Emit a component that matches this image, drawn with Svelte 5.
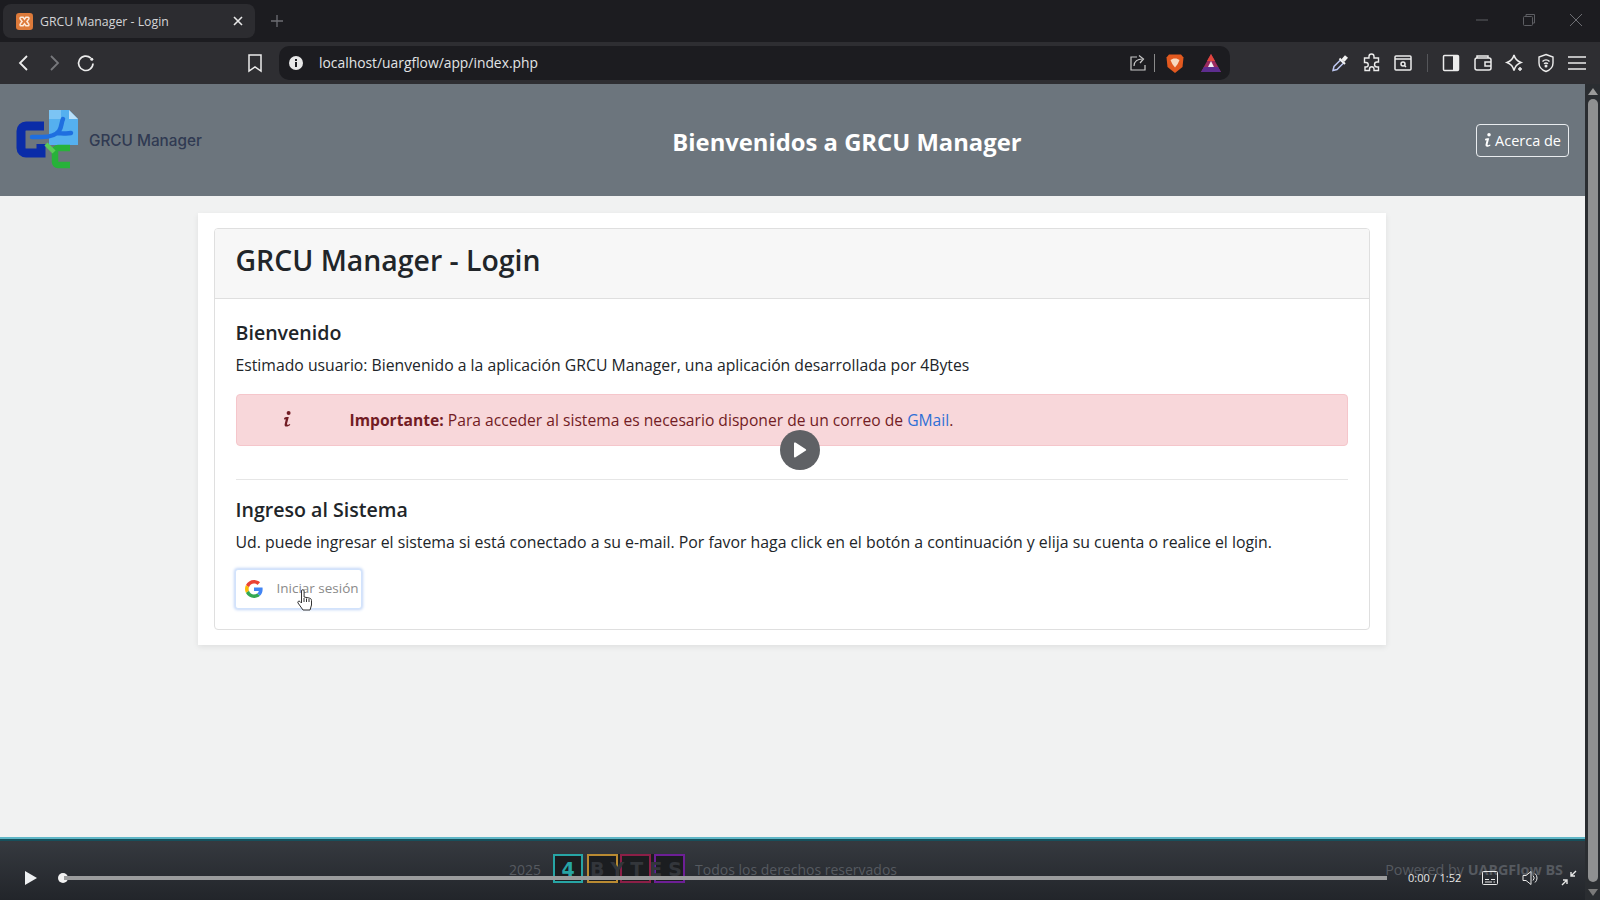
<script>
  const bytes = ['B', 'Y', 'T', 'E', 'S'];
  const frames = ['bo', 'br', 'bp'];
</script>

{#snippet infoIcon(color, w, h)}
  <svg width={w} height={h} viewBox="0 0 10 17" fill={color}>
    <circle cx="5.6" cy="2" r="2"/>
    <path d="M1 7.200c.5-.9 1.300-1.200 4.800-1.200L4 12.800c-.3 1.300.8 1.400 2.800.2l.5.8C5.500 15.800 1.300 16.600 1.600 13.400L2.800 8.300c-.5 0-1 .2-1.300.4z"/>
  </svg>
{/snippet}

<div class="screen">
  <div class="tabstrip">
    <div class="tab">
      <svg class="favicon" width="17" height="17" viewBox="0 0 16 16">
        <rect width="16" height="16" rx="3" fill="#dd7a3a"/>
        <path d="M4.500 4h2.200L8 5.800 9.300 4h2.200c.8 0 1 1.400.2 2.200L10.300 8l1.400 1.800c.8.800.6 2.200-.2 2.200H9.300L8 10.200 6.700 12H4.500c-.8 0-1-1.400-.2-2.200L5.700 8 4.300 6.200C3.500 5.400 3.700 4 4.500 4z" fill="none" stroke="#fde9da" stroke-width="1.400"/>
      </svg>
      <span class="tabtitle">GRCU Manager - Login</span>
      <svg class="tabclose" width="10" height="10" viewBox="0 0 10 10"><path d="M1 1l8 8M9 1l-8 8" stroke="#e8e8e8" stroke-width="1.600"/></svg>
    </div>
    <svg class="newtab" width="14" height="14" viewBox="0 0 14 14"><path d="M7 1v12M1 7h12" stroke="#6d6e73" stroke-width="1.300"/></svg>
    <div class="winctl">
      <svg width="14" height="14" viewBox="0 0 14 14"><path d="M1 7h12" stroke="#5d5e63"/></svg>
      <svg width="14" height="14" viewBox="0 0 14 14" fill="none" stroke="#5d5e63"><rect x="1.500" y="3.500" width="9" height="9" rx="1"/><path d="M4 3.500V1.500h8.500V10h-2"/></svg>
      <svg width="14" height="14" viewBox="0 0 14 14"><path d="M1 1l12 12M13 1L1 13" stroke="#6d6e73"/></svg>
    </div>
  </div>

  <div class="toolbar">
    <div class="nav">
      <svg width="18" height="20" viewBox="0 0 18 20" fill="none" stroke="#ececec" stroke-width="1.800"><path d="M13 3l-7 7 7 7"/></svg>
      <svg width="18" height="20" viewBox="0 0 18 20" fill="none" stroke="#77787c" stroke-width="1.800"><path d="M6 3l7 7-7 7"/></svg>
      <svg width="20" height="20" viewBox="0 0 20 20" fill="none" stroke="#ececec" stroke-width="1.700"><path d="M17 10.500a7.200 7.200 0 1 1-2.200-5.400"/><circle cx="15.800" cy="6.200" r="1.500" fill="#ececec" stroke="none"/></svg>
    </div>
    <svg class="bookmark" width="16" height="20" viewBox="0 0 16 20" fill="none" stroke="#ececec" stroke-width="1.500"><path d="M2 2h12v16l-6-4-6 4z"/></svg>
    <div class="urlbar">
      <svg class="info" width="14" height="14" viewBox="0 0 14 14"><circle cx="7" cy="7" r="7" fill="#e8e8e8"/><rect x="6" y="6" width="2" height="5" fill="#1d1d21"/><rect x="6" y="3" width="2" height="2" fill="#1d1d21"/></svg>
      <span class="url">localhost/uargflow/app/index.php</span>
      <svg class="share" width="18" height="18" viewBox="0 0 18 18" fill="none" stroke="#c9c9c9" stroke-width="1.200"><path d="M8 3H2v13h14v-5"/><path d="M5 12c0-5 4-7 8-7M10 1.500L14.500 5 11 9"/></svg>
      <span class="urlsep"></span>
      <svg class="brave" width="18" height="21" viewBox="0 0 18 21">
        <path d="M3 1.500h12l2.500 3-1 9.500L9 20 1.500 14l-1-9.500z" fill="#e2591f"/>
        <path d="M4.500 7l3-1.500h3l3 1.500-1.800 4L9 14.500 6.300 11z" fill="#f7d9bf"/>
      </svg>
      <svg class="bat" width="20" height="18" viewBox="0 0 20 18">
        <path d="M10 0L20 18H0z" fill="#9b2a5f"/>
        <path d="M10 0l4 7H6z" fill="#e0453c"/>
        <path d="M0 18l3-5h14l3 5z" fill="#5d2d8f"/>
        <path d="M10 7l3 6H7z" fill="#f2ecf2"/>
      </svg>
    </div>
    <div class="tools">
      <svg width="20" height="20" viewBox="0 0 20 20" fill="none" stroke-width="1.500"><path d="M3 17.500l1-4 6.500-6.500 3 3L7 16.500z" stroke="#bcc6f0"/><path d="M9.500 5.500l5.500 5.500" stroke="#f2f2f2" stroke-width="2"/><path d="M13 7.500l3.500-4" stroke="#f2f2f2" stroke-width="4"/></svg>
      <svg width="20" height="20" viewBox="0 0 20 20" fill="none" stroke="#ececec" stroke-width="1.400"><path d="M7 3.500a2.500 2.500 0 0 1 5 0V5h4.500v4h-1.500a2.500 2.500 0 0 0 0 5h1.500v3.500H12V16a2.200 2.200 0 0 0-4.500 0v1.500H3V14h1a2.200 2.200 0 0 0 0-4.500H2.500V5H7z"/></svg>
      <svg width="20" height="20" viewBox="0 0 20 20" fill="none" stroke="#ececec" stroke-width="1.500"><rect x="2" y="3" width="16" height="14" rx="1"/><path d="M2 6h16"/><circle cx="10" cy="11" r="2"/><path d="M11.500 12.500l1.500 1.500"/></svg>
      <span class="toolsep"></span>
      <svg width="20" height="20" viewBox="0 0 20 20"><rect x="2.500" y="2.500" width="15" height="15" rx="1" fill="none" stroke="#ececec" stroke-width="1.500"/><rect x="12" y="3" width="5" height="14" fill="#ececec"/></svg>
      <svg width="20" height="20" viewBox="0 0 20 20" fill="none" stroke="#ececec" stroke-width="1.500"><rect x="2" y="5" width="16" height="12" rx="2"/><path d="M18 9h-6v4h6M4 5V3h11v2"/></svg>
      <svg width="20" height="20" viewBox="0 0 20 20" fill="none" stroke="#ececec" stroke-width="1.500"><path d="M10 2c1 4 3 6 7 7.500-4 1.500-6 3.500-7 8-1-4.500-3-6.500-7-8 4-1.500 6-3.500 7-7.500z"/><path d="M16 14v4M14 16h4"/></svg>
      <svg width="20" height="20" viewBox="0 0 20 20" fill="none" stroke="#ececec" stroke-width="1.400"><path d="M10 1.500l7 2.500v6c0 4-3 7-7 8.500-4-1.500-7-4.500-7-8.500V4z"/><path d="M6.500 8.500a5 5 0 0 1 7 0M8 10.800a3 3 0 0 1 4 0"/><circle cx="10" cy="13" r=".8" fill="#ececec"/></svg>
      <svg width="20" height="20" viewBox="0 0 20 20" stroke="#ececec" stroke-width="1.500"><path d="M1 4h18M1 10h18M1 16h18"/></svg>
    </div>
  </div>

  <div class="viewport">
    <div class="page">
      <header class="hero">
        <div class="brand">
          <svg class="logo" width="64" height="62" viewBox="0 0 64 62">
            <path d="M33 2h20l9 9v26H33z" fill="#55b0ef"/>
            <path d="M33 2h12v9H33z" fill="#7cc4f4"/>
            <path d="M53 2l9 9h-9z" fill="#b8dff9"/>
            <path d="M28 18H10a5 5 0 0 0-5 5v17a5 5 0 0 0 5 5h15V36" fill="none" stroke="#0a2ca8" stroke-width="9"/>
            <path d="M16 29h10c8 0 14-2 17-6s2-8 4-12M41 25c4 0 9 1 14 0" fill="none" stroke="#1f6fe0" stroke-width="4.500" stroke-linecap="round"/>
            <path d="M54 40H42a3 3 0 0 0-3 3v11a3 3 0 0 0 3 3h12" fill="none" stroke="#28b23a" stroke-width="6.500"/>
            <path d="M30 36l8 8" stroke="#5ccb58" stroke-width="4.500"/>
          </svg>
          <span class="brandname">GRCU Manager</span>
        </div>
        <h1 class="hero-title">Bienvenidos a GRCU Manager</h1>
        <button class="about">{@render infoIcon('#fff', 9, 15)}<span>Acerca de</span></button>
      </header>

      <main class="content">
        <div class="outer">
          <section class="card">
            <div class="card-head"><h2>GRCU Manager - Login</h2></div>
            <div class="card-body">
              <h3>Bienvenido</h3>
              <p class="p1">Estimado usuario: Bienvenido a la aplicación GRCU Manager, una aplicación desarrollada por 4Bytes</p>
              <div class="alert">
                <span class="alert-icon">{@render infoIcon('#721c24', 10, 17)}</span>
                <span><strong>Importante:</strong> Para acceder al sistema es necesario disponer de un correo de <a href="#top">GMail</a>.</span>
              </div>
              <hr />
              <h3>Ingreso al Sistema</h3>
              <p class="p2">Ud. puede ingresar el sistema si está conectado a su e-mail. Por favor haga click en el botón a continuación y elija su cuenta o realice el login.</p>
              <button class="google">
                <svg width="18" height="18" viewBox="0 0 48 48">
                  <path fill="#EA4335" d="M24 9.500c3.500 0 6.700 1.200 9.200 3.600l6.900-6.900C35.900 2.400 30.400 0 24 0 14.600 0 6.500 5.400 2.600 13.200l8 6.200C12.500 13.700 17.800 9.500 24 9.500z"/>
                  <path fill="#4285F4" d="M47 24.500c0-1.600-.1-3.100-.4-4.500H24v9h12.900c-.6 3-2.200 5.500-4.700 7.200l7.700 6c4.500-4.200 7.100-10.300 7.100-17.700z"/>
                  <path fill="#FBBC05" d="M10.500 28.600c-.5-1.500-.8-3-.8-4.600s.3-3.100.8-4.600l-8-6.200C.9 16.500 0 20.100 0 24s.9 7.500 2.600 10.800z"/>
                  <path fill="#34A853" d="M24 48c6.500 0 11.900-2.100 15.900-5.800l-7.700-6c-2.200 1.400-4.900 2.300-8.200 2.300-6.200 0-11.500-4.200-13.400-9.900l-8 6.200C6.500 42.600 14.600 48 24 48z"/>
                </svg>
                <span>Iniciar sesión</span>
              </button>
            </div>
          </section>
        </div>
      </main>

      <footer class="foot">
        <span class="year">2025</span>
        <span class="boxes">
          <span class="box b4">4</span>
          <span class="word">
            {#each frames as f}<span class="box {f}"></span>{/each}
            <span class="letters">
              {#each bytes as l}<span>{l}</span>{/each}
            </span>
          </span>
        </span>
        <span>Todos los derechos reservados</span>
        <span class="powered">Powered by <b>UARGFlow BS</b></span>
      </footer>
    </div>
    <div class="scrollbar">
      <span class="arrow up"></span>
      <span class="thumb"></span>
      <span class="arrow down"></span>
    </div>

    <div class="bigplay">
      <svg width="14" height="16" viewBox="0 0 14 16"><path d="M1 1.500a1 1 0 0 1 1.500-.9l10 6.500a1 1 0 0 1 0 1.700l-10 6.500A1 1 0 0 1 1 14.500z" fill="#fff"/></svg>
    </div>

    <div class="cursor">
      <svg width="16" height="22" viewBox="0 0 16 22" fill="#fff" stroke="#333" stroke-width="1"><path d="M4.500 2a1.300 1.300 0 0 1 2.600 0v6l5 1c1.500.4 2.400 1 2.400 2.500V16l-1.500 5H6L1 14c-.8-1.200.8-2.700 2-1.500l1.500 1.500z"/><path d="M7 9v4M9.500 9.500V13M12 10v3" fill="none"/></svg>
    </div>

    <div class="player">
      <svg class="pl-play" width="14" height="16" viewBox="0 0 14 16"><path d="M1 1l12 7-12 7z" fill="#eef0f2"/></svg>
      <span class="knob"></span>
      <span class="track"></span>
      <span class="time">0:00 / 1:52</span>
      <svg class="pl-cc" width="16" height="14" viewBox="0 0 16 14" fill="none" stroke="#e8e8e8"><rect x=".5" y=".5" width="15" height="13" rx="1"/><path d="M3 8.500h4M9 8.500h4M3 11h7M11.500 11H13"/></svg>
      <svg class="pl-vol" width="16" height="16" viewBox="0 0 16 16" fill="none" stroke="#e8e8e8"><path d="M1 5.500h3L9 1.500v13L4 10.500H1z"/><path d="M11 5.500a3.500 3.500 0 0 1 0 5M13 3.500a6 6 0 0 1 0 9"/></svg>
      <svg class="pl-exit" width="16" height="16" viewBox="0 0 16 16" fill="none" stroke="#e8e8e8" stroke-width="1.400"><path d="M15 1l-5 5M10 2v4h4M1 15l5-5M6 14v-4H2"/></svg>
    </div>
  </div>
</div>

<style>
  :global(body) {
    margin: 0;
    overflow: hidden;
    background: #1d1d21;
  }
  .screen {
    width: 1600px;
    height: 900px;
    display: flex;
    flex-direction: column;
    overflow: hidden;
    font-family: "Open Sans", "Noto Sans", sans-serif;
    color: #212529;
  }
  svg { display: block; flex: none; }

  /* Browser chrome */
  .tabstrip {
    height: 42px;
    flex: none;
    background: #1c1c20;
    display: flex;
    align-items: flex-start;
    padding: 4px 0 0 3px;
    box-sizing: border-box;
  }
  .tab {
    width: 252px;
    height: 34px;
    background: #2c2c30;
    border-radius: 8px;
    display: flex;
    align-items: center;
    padding: 0 12px 0 13px;
    box-sizing: border-box;
    color: #d5d5d7;
    font-size: 12.300px;
  }
  .tabtitle { margin-left: 7px; flex: 1; }
  .newtab { margin: 10px 0 0 15px; }
  .winctl {
    margin-left: auto;
    display: flex;
    gap: 33px;
    padding: 9px 17px 0 0;
  }
  .toolbar {
    height: 42px;
    flex: none;
    background: #2e2e32;
    display: flex;
    align-items: center;
    padding-left: 14px;
    box-sizing: border-box;
  }
  .nav { display: flex; align-items: center; gap: 13px; }
  .bookmark { margin-left: 151px; }
  .urlbar {
    margin-left: 16px;
    width: 951px;
    height: 34px;
    background: #1c1c20;
    border-radius: 10px;
    display: flex;
    align-items: center;
    padding-left: 10px;
    box-sizing: border-box;
    color: #dcdcdc;
  }
  .url {
    margin: -2px 0 0 16px;
    font-size: 13.850px;
    flex: 1;
    color: #e2e4e6;
  }
  .urlsep { width: 1px; height: 18px; background: #8a8a8a; margin-left: 7px; }
  .brave { margin-left: 11px; }
  .bat { margin: 0 9px 0 17px; }
  .tools {
    margin-left: 100px;
    display: flex;
    align-items: center;
    gap: 11.500px;
  }
  .toolsep { width: 1px; height: 18px; background: #55565a; margin: 0 2px; }

  /* Page */
  .viewport {
    flex: 1;
    min-height: 0;
    display: flex;
    position: relative;
  }
  .page {
    flex: 1;
    min-width: 0;
    display: flex;
    flex-direction: column;
    background: #f1f2f2;
  }
  .hero {
    height: 112px;
    flex: none;
    background: #6c757d;
    display: flex;
    align-items: center;
    padding: 0 16px;
    box-sizing: border-box;
  }
  .brand { display: flex; align-items: center; gap: 9px; }
  .logo { margin-top: -2px; }
  .brandname { color: #303a52; font-family: Inter, sans-serif; font-size: 15.300px; font-weight: 500; }
  .hero-title {
    flex: 1;
    margin: 3px 0 0;
    padding-left: 16px;
    text-align: center;
    color: #fff;
    font-size: 23.800px;
    font-weight: 700;
    white-space: nowrap;
  }
  .about {
    width: 93px;
    height: 33px;
    background: transparent;
    border: 1px solid #e9ecef;
    border-radius: 4px;
    color: #fff;
    font: inherit;
    font-size: 14.500px;
    padding: 0;
    white-space: nowrap;
    display: flex;
    align-items: center;
    justify-content: center;
    gap: 2px;
  }
  .content {
    flex: 1;
    display: flex;
    justify-content: center;
    align-items: flex-start;
    padding: 17px 2px 0 0;
  }
  .outer {
    width: 1188px;
    padding: 15px 16px;
    box-sizing: border-box;
    background: #fff;
    box-shadow: 0 2px 6px rgba(0, 0, 0, .08);
  }
  .card {
    border: 1px solid #dfdfdf;
    border-radius: 4px;
    overflow: hidden;
  }
  .card-head {
    background: #f7f7f7;
    border-bottom: 1px solid #dfdfdf;
    padding: 0 21px 8px;
    height: 61px;
    display: flex;
    align-items: center;
  }
  h2 { margin: 0; font-size: 28.400px; font-weight: 600; color: #212529; }
  .card-body { padding: 20px 21px 20px; }
  h3 { margin: 0 0 7px; font-size: 19.600px; font-weight: 600; line-height: 27px; color: #212529; }
  p { margin: 0; line-height: 24px; }
  .p1 { font-size: 15.750px; }
  .p2 { font-size: 15.850px; }
  .alert {
    margin-top: 17px;
    height: 52px;
    background: #f8d7da;
    border: 1px solid #f5c6cb;
    border-radius: 4px;
    display: flex;
    align-items: center;
    color: #721c24;
    font-size: 15.650px;
    box-sizing: border-box;
  }
  .alert-icon {
    width: 113px;
    box-sizing: border-box;
    padding: 0 10px 1px 0;
    display: flex;
    justify-content: center;
  }
  .alert a { color: #2f6fd6; text-decoration: none; }
  hr { border: 0; border-top: 1px solid #e6e6e6; margin: 33px 0 16px; }
  .google {
    margin: 15px 0 0 -1px;
    width: 127px;
    height: 40px;
    background: #fff;
    border: 1px solid #d2e3fc;
    border-radius: 3px;
    box-shadow: 0 0 3px 1px #c3d6f7;
    display: flex;
    align-items: center;
    gap: 14px;
    padding: 0 0 2px 9px;
    box-sizing: border-box;
    color: #8a8a8a;
    font: inherit;
    font-size: 13.500px;
    white-space: nowrap;
  }
  .google svg { margin-top: 2px; }
  .foot {
    height: 63px;
    flex: none;
    border-top: 2px solid #5fb6c6;
    box-shadow: inset 0 2px 0 #16505c;
    background: linear-gradient(#363a40, #22252a);
    box-sizing: border-box;
    display: flex;
    align-items: center;
    padding: 0 22px 0 509px;
    gap: 12px;
    color: #565a60;
    font-size: 14px;
  }
  .boxes { display: flex; gap: 4px; margin: -2px -2px 0 0; }
  .box {
    width: 30px;
    height: 29px;
    display: flex;
    align-items: center;
    justify-content: center;
    border: 2px solid;
    box-sizing: border-box;
    font-family: "DejaVu Sans", sans-serif;
    font-weight: 700;
  }
  .b4 { color: #27a5a5; border-color: #27a5a5; background: #1b1d20; font-size: 19px; }
  .word { display: flex; gap: 3px; position: relative; background: #1b1d20; }
  .word .box { width: 31px; }
  .word .box:first-child { margin-right: -1px; }
  .bo { border-color: #b98a32; }
  .br { border-color: #8c1f47; }
  .bp { border-color: #6d1f96; }
  .letters {
    position: absolute;
    inset: 0;
    display: flex;
    align-items: center;
    justify-content: space-around;
    font-family: "DejaVu Sans", sans-serif;
    font-weight: 700;
    font-size: 19px;
    color: #33363b;
  }
  .powered { margin-left: auto; font-size: 14.350px; }
  .powered b { font-weight: 700; }

  .scrollbar {
    width: 15px;
    flex: none;
    background: #2a2d31;
    display: flex;
    flex-direction: column;
    align-items: center;
  }
  .arrow { width: 0; height: 0; border-left: 5px solid transparent; border-right: 5px solid transparent; }
  .up { border-bottom: 7px solid #9a9a9a; margin-top: 4px; }
  .down { border-top: 7px solid #7a7a7a; margin-bottom: 4px; }
  .thumb { flex: 1; width: 10px; margin: 4px 0 7px; border-radius: 5px; background: #8f9091; }

  .bigplay {
    position: absolute;
    left: 780px;
    top: 346px;
    width: 40px;
    height: 40px;
    border-radius: 50%;
    background: #5f6165;
    display: flex;
    align-items: center;
    justify-content: center;
  }
  .cursor { position: absolute; left: 297px; top: 505px; }
  .player { position: absolute; left: 0; right: 15px; bottom: 0; height: 62px; }
  .player > * { position: absolute; }
  .pl-play { left: 24px; top: 32px; }
  .knob { left: 58px; top: 35px; width: 10px; height: 10px; border-radius: 50%; background: #f2f2f2; }
  .track { left: 64px; top: 38px; width: 1323px; height: 4px; background: #9b9c9d; }
  .time { left: 1408px; top: 32px; color: #e8e8e8; font-size: 11px; }
  .pl-cc { left: 1482px; top: 33px; }
  .pl-vol { left: 1522px; top: 32px; }
  .pl-exit { left: 1561px; top: 32px; }
</style>
